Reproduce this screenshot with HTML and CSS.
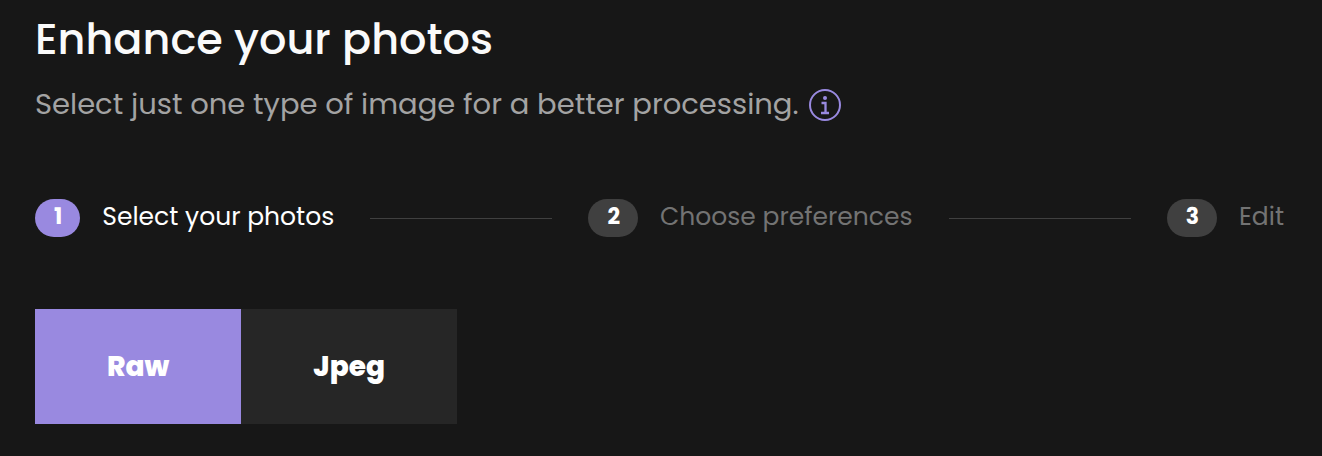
FILE: index.html
```html
<!DOCTYPE html>
<html lang="en">
<head>
    <meta charset="UTF-8">
    <meta name="viewport" content="width=device-width, initial-scale=1.0">
    <title>Enhance your photos</title>
    <link rel="stylesheet" href="styles.css">
</head>
<body>

<main class="container">
    <header>
        <h1>Enhance your photos</h1>
        <div class="subtitle">
            <p>Select just one type of image for a better processing.</p>
            <button type="button" class="info" aria-label="More information">
                <svg width="32" height="32" viewBox="0 0 32 32" fill="none" stroke="currentColor" stroke-width="2">
                    <circle cx="16" cy="16" r="15"/>
                    <circle cx="16" cy="9" r="2" fill="currentColor" stroke="none"/>
                    <path d="M12.5 14H16.5V24M12 24H20" stroke-width="2.3"/>
                </svg>
            </button>
        </div>
    </header>

    <ol class="steps">
        <li class="step active"><span class="number">1</span><span class="label">Select your photos</span></li>
        <li class="line" aria-hidden="true"></li>
        <li class="step"><span class="number">2</span><span class="label">Choose preferences</span></li>
        <li class="line" aria-hidden="true"></li>
        <li class="step"><span class="number">3</span><span class="label">Edit</span></li>
    </ol>

    <div class="types">
        <button type="button" class="type selected" aria-pressed="true">Raw</button>
        <button type="button" class="type" aria-pressed="false">Jpeg</button>
    </div>
</main>

</body>
</html>
```
FILE: styles.css
```css
* {
    box-sizing: border-box;
}
body {
    margin: 0;
    background-color: #171717;
    color: #fff;
    font-family: Poppins, Inter, sans-serif;
}
.container {
    padding: 7px 38px 32px 35px;
}
h1 {
    margin: 0;
    color: #fafafa;
    font-size: 43px;
    font-weight: 500;
    line-height: 64px;
}
.subtitle {
    display: flex;
    align-items: center;
    gap: 10px;
    margin-top: 10px;
    color: #a3a3a3;
}
.subtitle p {
    margin: 0;
    padding-bottom: 2px;
    font-size: 29px;
    line-height: 46px;
}
.info {
    display: flex;
    padding: 0;
    border: none;
    background: none;
    color: #9989e0;
    cursor: pointer;
}
.steps {
    display: flex;
    align-items: center;
    gap: 36px;
    margin: 70px 0 72px;
    padding: 0;
    list-style: none;
}
.step {
    display: flex;
    align-items: center;
    gap: 22px;
    color: #737373;
    font-size: 25px;
    line-height: 36px;
    white-space: nowrap;
}
.step.active {
    color: #fff;
}
.number {
    padding: 0 18px 2px 19px;
    border-radius: 19px;
    background-color: #404040;
    color: #fff;
    font-size: 22px;
    font-weight: 700;
}
.label {
    padding-bottom: 2px;
}
.active .number {
    background-color: #9989e0;
}
.line {
    flex: 1;
    height: 1px;
    background-color: #404040;
}
.types {
    display: flex;
}
.type {
    padding: 36px 72px;
    border: none;
    background-color: #262626;
    color: #fff;
    font-family: inherit;
    font-size: 28px;
    font-weight: 800;
    line-height: 43px;
    cursor: pointer;
}
.type.selected {
    background-color: #9989e0;
}
```
